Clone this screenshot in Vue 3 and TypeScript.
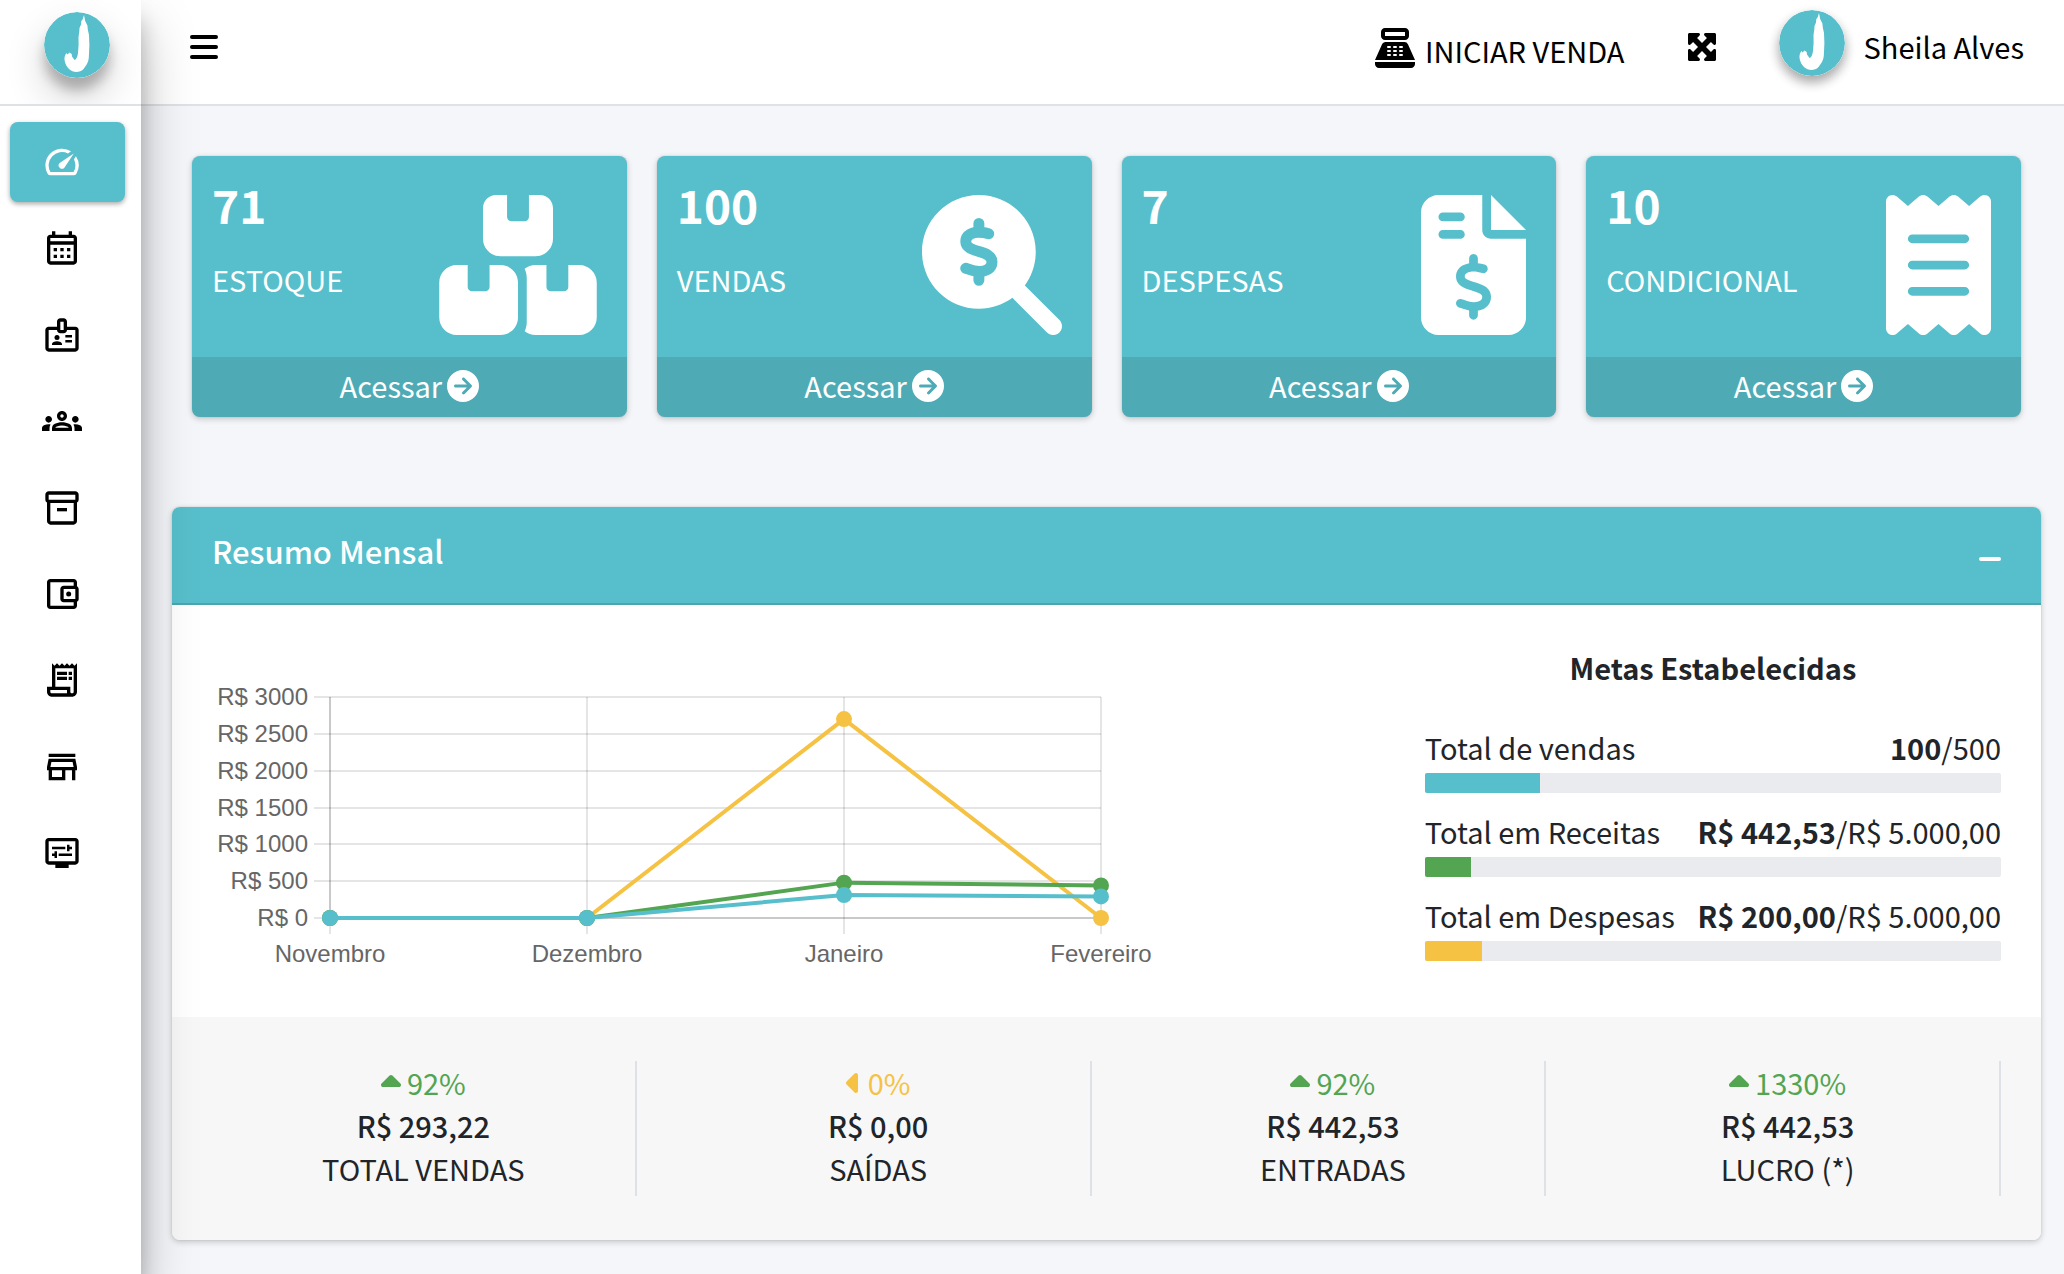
<script setup lang="ts">
interface NavItem {
  label: string
  paths: string[]
}

interface SummaryCard {
  value: number
  label: string
  box: string
  width: number
  path: string
  dollar?: boolean
}

interface Goal {
  label: string
  current: string
  target: string
  percent: number
  tone: string
}

interface Stat {
  change: string
  direction: 'up' | 'left'
  value: string
  label: string
}

interface Series {
  color: string
  values: number[]
}

const navItems: NavItem[] = [
  {
    label: 'Painel',
    paths: [
      'M20.38 8.57l-1.23 1.85a8 8 0 0 1-.22 7.58H5.07A8 8 0 0 1 15.58 6.85l1.85-1.23A10 10 0 0 0 3.35 19a2 2 0 0 0 1.72 1h13.85a2 2 0 0 0 1.74-1 10 10 0 0 0-.27-10.44zm-9.79 6.84a2 2 0 0 0 2.83 0l5.66-8.49-8.49 5.66a2 2 0 0 0 0 2.83z',
    ],
  },
  {
    label: 'Agenda',
    paths: [
      'M19 4h-1V2h-2v2H8V2H6v2H5c-1.11 0-1.99.9-1.99 2L3 20c0 1.1.89 2 2 2h14c1.1 0 2-.9 2-2V6c0-1.1-.9-2-2-2zm0 16H5V10h14v10zm0-12H5V6h14v2zM9 14H7v-2h2v2zm4 0h-2v-2h2v2zm4 0h-2v-2h2v2zm-8 4H7v-2h2v2zm4 0h-2v-2h2v2zm4 0h-2v-2h2v2z',
    ],
  },
  {
    label: 'Funcionários',
    paths: [
      'M20 7h-5V4c0-1.1-.9-2-2-2h-2c-1.1 0-2 .9-2 2v3H4c-1.1 0-2 .9-2 2v11c0 1.1.9 2 2 2h16c1.1 0 2-.9 2-2V9c0-1.1-.9-2-2-2zm-9-3h2v5h-2V4zm9 16H4V9h5c0 1.1.9 2 2 2h2c1.1 0 2-.9 2-2h5v11z',
      'M7.5 13.5a1.5 1.5 0 1 0 3 0a1.5 1.5 0 1 0-3 0z',
      'M11.08 16.18C10.44 15.9 9.74 15.75 9 15.75s-1.44.15-2.08.43C6.36 16.42 6 16.96 6 17.57V18h6v-.43c0-.61-.36-1.15-.92-1.39z',
      'M14 12h4v1.5h-4zM14 15h4v1.5h-4z',
    ],
  },
  {
    label: 'Clientes',
    paths: [
      'M4 13c1.1 0 2-.9 2-2s-.9-2-2-2-2 .9-2 2 .9 2 2 2zm1.13 1.1C4.76 14.04 4.39 14 4 14c-.99 0-1.93.21-2.78.58C.48 14.9 0 15.62 0 16.43V18h4.5v-1.61c0-.83.23-1.61.63-2.29zM20 13c1.1 0 2-.9 2-2s-.9-2-2-2-2 .9-2 2 .9 2 2 2zm4 3.43c0-.81-.48-1.53-1.22-1.85C21.93 14.21 20.99 14 20 14c-.39 0-.76.04-1.13.1.4.68.63 1.46.63 2.29V18H24v-1.57zM16.24 13.65c-1.17-.52-2.61-.9-4.24-.9s-3.07.39-4.24.9C6.68 14.13 6 15.21 6 16.39V18h12v-1.61c0-1.18-.68-2.26-1.76-2.74zM8.07 16c.09-.23.13-.39.91-.69.97-.38 1.99-.56 3.02-.56s2.05.18 3.02.56c.77.3.81.46.91.69H8.07z',
      'M12 8c.55 0 1 .45 1 1s-.45 1-1 1-1-.45-1-1 .45-1 1-1m0-2c-1.66 0-3 1.34-3 3s1.34 3 3 3 3-1.34 3-3-1.34-3-3-3z',
    ],
  },
  {
    label: 'Estoque',
    paths: [
      'M20 2H4c-1 0-2 .9-2 2v3.01c0 .72.43 1.34 1 1.69V20c0 1.1 1.1 2 2 2h14c.9 0 2-.9 2-2V8.7c.57-.35 1-.97 1-1.69V4c0-1.1-1-2-2-2zm-1 18H5V9h14v11zm1-13H4V4h16v3z',
      'M9 12h6v2H9z',
    ],
  },
  {
    label: 'Carteira',
    paths: [
      'M21 7.28V5c0-1.1-.9-2-2-2H5c-1.11 0-2 .9-2 2v14c0 1.1.89 2 2 2h14c1.1 0 2-.9 2-2v-2.28c.59-.35 1-.98 1-1.72V9c0-.74-.41-1.37-1-1.72zM20 9v6h-7V9h7zM5 19V5h14v2h-6c-1.1 0-2 .9-2 2v6c0 1.1.9 2 2 2h6v2H5z',
      'M14.5 12a1.5 1.5 0 1 0 3 0a1.5 1.5 0 1 0-3 0z',
    ],
  },
  {
    label: 'Recibos',
    paths: [
      'M19.5 3.5L18 2l-1.5 1.5L15 2l-1.5 1.5L12 2l-1.5 1.5L9 2 7.5 3.5 6 2v14H3v3c0 1.66 1.34 3 3 3h12c1.66 0 3-1.34 3-3V2l-1.5 1.5zM15 20H6c-.55 0-1-.45-1-1v-1h10v2zm4-1c0 .55-.45 1-1 1s-1-.45-1-1v-3H8V5h11v14z',
      'M9 7h6v2H9zM16 7h2v2h-2zM9 10h6v2H9zM16 10h2v2h-2z',
    ],
  },
  {
    label: 'Loja',
    paths: [
      'M18.36 9l.6 3H5.04l.6-3h12.72M20 4H4v2h16V4zm0 3H4l-1 5v2h1v6h10v-6h4v6h2v-6h1v-2l-1-5zM6 18v-4h6v4H6z',
    ],
  },
  {
    label: 'Configurações',
    paths: [
      'M20 3H4c-1.11 0-2 .89-2 2v12c0 1.1.89 2 2 2h4v2h8v-2h4c1.1 0 2-.9 2-2V5c0-1.11-.9-2-2-2zm0 14H4V5h16v12z',
      'M6 8.25h8v1.5H6zM16.5 9.75H18v-1.5h-1.5V7H15v4h1.5zM10 12.25h8v1.5h-8zM7.5 15H9v-4H7.5v1.25H6v1.5h1.5z',
    ],
  },
]

const dollarPath =
  'M192 216c8.8 0 16 7.2 16 16v17.3c8.5 1.2 16.7 3.1 24.1 5.1c8.5 2.3 13.6 11 11.3 19.6s-11 13.6-19.6 11.3c-11.1-3-22-5.2-32.1-5.3c-8.4-.1-17.4 1.8-23.6 5.5c-5.7 3.4-8.1 7.3-8.1 12.8c0 3.7 1.3 6.5 7.3 10.1c6.9 4.1 16.6 7.1 29.2 10.9l.5 .1c11.3 3.4 25.3 7.6 36.3 14.6c12.1 7.6 22.4 19.7 22.7 38.2c.3 19.3-9.6 33.3-22.9 41.6c-7.7 4.8-16.4 7.6-25.1 9.1V440c0 8.8-7.2 16-16 16s-16-7.2-16-16V422.2c-11.2-2.1-21.7-5.7-30.9-8.9c-2.1-.7-4.2-1.4-6.2-2.1c-8.4-2.8-12.9-11.9-10.1-20.2s11.9-12.9 20.2-10.1c2.5 .8 4.8 1.6 7.1 2.4c13.6 4.6 24.6 8.4 36.3 8.7c9.1 .3 17.9-1.7 23.7-5.3c5.1-3.2 7.9-7.3 7.8-14c-.1-4.6-1.8-7.8-7.7-11.6c-6.8-4.3-16.5-7.4-29-11.2l-1.6-.5c-11-3.3-24.3-7.3-34.8-13.7c-12-7.2-22.6-18.9-22.7-37.3c-.1-19.4 10.8-32.8 23.8-40.5c7.5-4.4 15.8-7.2 24.1-8.7V232c0-8.8 7.2-16 16-16z'

const cards: SummaryCard[] = [
  {
    value: 71,
    label: 'ESTOQUE',
    box: '0 0 576 512',
    width: 158,
    path: 'M248 0H208c-26.5 0-48 21.5-48 48V160c0 35.3 28.7 64 64 64H352c35.3 0 64-28.7 64-64V48c0-26.5-21.5-48-48-48H328V80c0 8.8-7.2 16-16 16H264c-8.8 0-16-7.2-16-16V0zM64 256c-35.3 0-64 28.7-64 64V448c0 35.3 28.7 64 64 64H224c35.3 0 64-28.7 64-64V320c0-35.3-28.7-64-64-64H184v80c0 8.8-7.2 16-16 16H120c-8.8 0-16-7.2-16-16V256H64zM352 512H512c35.3 0 64-28.7 64-64V320c0-35.3-28.7-64-64-64H472v80c0 8.8-7.2 16-16 16H408c-8.8 0-16-7.2-16-16V256H352c-15 0-28.8 5.1-39.7 13.8c4.9 10.4 7.7 22 7.7 34.2V464c0 12.2-2.8 23.8-7.7 34.2C323.2 506.9 337 512 352 512z',
  },
  {
    value: 100,
    label: 'VENDAS',
    box: '0 0 512 512',
    width: 140,
    path: 'M416 208c0 45.9-14.9 88.3-40 122.7L502.6 457.4c12.5 12.5 12.5 32.8 0 45.3s-32.8 12.5-45.3 0L330.7 376c-34.4 25.2-76.8 40-122.7 40C93.1 416 0 322.9 0 208S93.1 0 208 0S416 93.1 416 208z',
    dollar: true,
  },
  {
    value: 7,
    label: 'DESPESAS',
    box: '0 0 384 512',
    width: 105,
    path:
      'M64 0C28.7 0 0 28.7 0 64V448c0 35.3 28.7 64 64 64H320c35.3 0 64-28.7 64-64V160H256c-17.7 0-32-14.3-32-32V0H64zM256 0V128H384L256 0zM80 64h64a16 16 0 0 1 0 32H80a16 16 0 0 1 0-32zM80 128h64a16 16 0 0 1 0 32H80a16 16 0 0 1 0-32z' +
      dollarPath,
  },
  {
    value: 10,
    label: 'CONDICIONAL',
    box: '0 0 384 512',
    width: 105,
    path: 'M14 2.2C22.5-1.7 32.5-.3 39.6 5.8L80 40.4 120.4 5.8c9-7.7 22.3-7.7 31.2 0L192 40.4 232.4 5.8c9-7.7 22.3-7.7 31.2 0L304 40.4 344.4 5.8c7.1-6.1 17.1-7.5 25.6-3.6s14 12.4 14 21.8V488c0 9.4-5.5 17.9-14 21.8s-18.5 2.5-25.6-3.6L304 471.6l-40.4 34.6c-9 7.7-22.3 7.7-31.2 0L192 471.6l-40.4 34.6c-9 7.7-22.3 7.7-31.2 0L80 471.6 39.6 506.2c-7.1 6.1-17.1 7.5-25.6 3.6S0 497.4 0 488V24C0 14.6 5.5 6.1 14 2.2zM96 144a16 16 0 0 0 0 32H288a16 16 0 0 0 0-32zM96 240a16 16 0 0 0 0 32H288a16 16 0 0 0 0-32zM96 336a16 16 0 0 0 0 32H288a16 16 0 0 0 0-32z',
  },
]

const goals: Goal[] = [
  { label: 'Total de vendas', current: '100', target: '500', percent: 20, tone: 'teal' },
  { label: 'Total em Receitas', current: 'R$ 442,53', target: 'R$ 5.000,00', percent: 8, tone: 'green' },
  { label: 'Total em Despesas', current: 'R$ 200,00', target: 'R$ 5.000,00', percent: 10, tone: 'yellow' },
]

const stats: Stat[] = [
  { change: '92%', direction: 'up', value: 'R$ 293,22', label: 'TOTAL VENDAS' },
  { change: '0%', direction: 'left', value: 'R$ 0,00', label: 'SAÍDAS' },
  { change: '92%', direction: 'up', value: 'R$ 442,53', label: 'ENTRADAS' },
  { change: '1330%', direction: 'up', value: 'R$ 442,53', label: 'LUCRO (*)' },
]

// Chart geometry
const months = ['Novembro', 'Dezembro', 'Janeiro', 'Fevereiro']
const ticks = [3000, 2500, 2000, 1500, 1000, 500, 0]
const plot = { left: 118, step: 257, top: 12, height: 221 }
const plotRight = plot.left + plot.step * (months.length - 1)
const plotBottom = plot.top + plot.height

const series: Series[] = [
  { color: '#f6c244', values: [0, 0, 2700, 0] },
  { color: '#53a551', values: [0, 0, 480, 442.53] },
  { color: '#57bfcb', values: [0, 0, 312, 293.22] },
]

const xAt = (index: number): number => plot.left + plot.step * index
const yAt = (value: number): number => plotBottom - (value / 3000) * plot.height
const pointsOf = (s: Series): string => s.values.map((v, i) => `${xAt(i)},${yAt(v)}`).join(' ')

const logoPath =
  'M40 3L41.2 9L43.4 13.5L43.8 17.5L45 23L45.4 33L44.8 46C44.5 50 42 54 39.5 57C37.5 59.3 35 60 32.5 60C27 60 22 55.5 20.7 49C20 45.5 21 42.5 22.5 41L23.5 42.5L25.5 40.5L27.7 42L28 44.5L30.5 48C32.5 47.5 33.4 45 34 41L34.6 33L34.5 25L35.3 19.5L35.5 16L37 12.5L37.3 9L38.6 7.5Z'
</script>

<template>
  <div class="app">
    <aside class="sidebar">
      <a class="brand" href="#" aria-label="Início">
        <svg class="logo logo-deep" viewBox="0 0 66 66" aria-hidden="true">
          <circle cx="33" cy="33" r="33" fill="#57bfcb" />
          <path :d="logoPath" fill="#fff" />
        </svg>
      </a>
      <nav class="nav">
        <a
          v-for="(item, index) in navItems"
          :key="item.label"
          href="#"
          class="nav-link"
          :class="{ active: index === 0 }"
          :aria-label="item.label"
        >
          <svg viewBox="0 0 24 24" aria-hidden="true">
            <path v-for="d in item.paths" :key="d" :d="d" />
          </svg>
        </a>
      </nav>
    </aside>

    <div class="page">
      <header class="topbar">
        <button class="icon-button" type="button" aria-label="Menu">
          <svg class="bars" viewBox="0 0 448 512" aria-hidden="true">
            <path
              d="M32 64H416a32 32 0 0 1 0 64H32a32 32 0 0 1 0-64zM32 224H416a32 32 0 0 1 0 64H32a32 32 0 0 1 0-64zM32 384H416a32 32 0 0 1 0 64H32a32 32 0 0 1 0-64z"
            />
          </svg>
        </button>
        <div class="topbar-right">
          <a class="start-sale" href="#">
            <svg viewBox="0 0 24 24" fill-rule="evenodd" aria-hidden="true">
              <path d="M17 2H7c-1.1 0-2 .9-2 2v2c0 1.1.9 2 2 2h10c1.1 0 2-.9 2-2V4c0-1.1-.9-2-2-2zm0 4H7V4h10v2z" />
              <path
                d="M20 22H4c-1.1 0-2-.9-2-2v-1h20v1c0 1.1-.9 2-2 2zM18.53 10.19A2 2 0 0 0 16.7 9H7.3c-.79 0-1.51.47-1.83 1.19L2 18h20zM8.5 11h1a.5.5 0 0 1 0 1h-1a.5.5 0 0 1 0-1zM11.5 11h1a.5.5 0 0 1 0 1h-1a.5.5 0 0 1 0-1zM14.5 11h1a.5.5 0 0 1 0 1h-1a.5.5 0 0 1 0-1zM8.5 13h1a.5.5 0 0 1 0 1h-1a.5.5 0 0 1 0-1zM11.5 13h1a.5.5 0 0 1 0 1h-1a.5.5 0 0 1 0-1zM14.5 13h1a.5.5 0 0 1 0 1h-1a.5.5 0 0 1 0-1zM8.5 15h1a.5.5 0 0 1 0 1h-1a.5.5 0 0 1 0-1zM11.5 15h1a.5.5 0 0 1 0 1h-1a.5.5 0 0 1 0-1zM14.5 15h1a.5.5 0 0 1 0 1h-1a.5.5 0 0 1 0-1z"
              />
            </svg>
            <span>INICIAR VENDA</span>
          </a>
          <button class="icon-button" type="button" aria-label="Tela cheia">
            <svg class="expand" viewBox="0 0 512 512" aria-hidden="true">
              <path
                d="M200 32H56C42.7 32 32 42.7 32 56V200c0 9.7 5.8 18.5 14.8 22.2s19.3 1.7 26.2-5.2l40-40 79 79-79 79L73 295c-6.9-6.9-17.2-8.9-26.2-5.2S32 302.3 32 312V456c0 13.3 10.7 24 24 24H200c9.7 0 18.5-5.8 22.2-14.8s1.7-19.3-5.2-26.2l-40-40 79-79 79 79-40 40c-6.9 6.9-8.9 17.2-5.2 26.2s12.5 14.8 22.2 14.8H456c13.3 0 24-10.7 24-24V312c0-9.7-5.8-18.5-14.8-22.2s-19.3-1.7-26.2 5.2l-40 40-79-79 79-79 40 40c6.9 6.9 17.2 8.9 26.2 5.2s14.8-12.5 14.8-22.2V56c0-13.3-10.7-24-24-24H312c-9.7 0-18.5 5.8-22.2 14.8s-1.7 19.3 5.2 26.2l40 40-79 79-79-79 40-40c6.9-6.9 8.9-17.2 5.2-26.2S209.7 32 200 32z"
              />
            </svg>
          </button>
          <a class="user" href="#">
            <svg class="logo" viewBox="0 0 66 66" aria-hidden="true">
              <circle cx="33" cy="33" r="33" fill="#57bfcb" />
              <path :d="logoPath" fill="#fff" />
            </svg>
            <span>Sheila Alves</span>
          </a>
        </div>
      </header>

      <main class="content">
        <section class="cards">
          <article v-for="card in cards" :key="card.label" class="card">
            <div class="card-inner">
              <div>
                <h3>{{ card.value }}</h3>
                <p>{{ card.label }}</p>
              </div>
              <svg
                class="card-icon"
                :viewBox="card.box"
                :width="card.width"
                height="140"
                fill-rule="evenodd"
                aria-hidden="true"
              >
                <path :d="card.path" fill="#fff" />
                <path
                  v-if="card.dollar"
                  :d="dollarPath"
                  transform="translate(16 -128)"
                  fill="#57bfcb"
                  stroke="#57bfcb"
                  stroke-width="8"
                />
              </svg>
            </div>
            <a class="card-footer" href="#">
              <span>Acessar</span>
              <svg viewBox="0 0 512 512" fill-rule="evenodd" aria-hidden="true">
                <path
                  d="M0 256a256 256 0 1 0 512 0A256 256 0 1 0 0 256zM281 385c-9.4 9.4-24.6 9.4-33.9 0s-9.4-24.6 0-33.9l71-71L136 280c-13.3 0-24-10.7-24-24s10.7-24 24-24l182.1 0-71-71c-9.4-9.4-9.4-24.6 0-33.9s24.6-9.4 33.9 0L393 239c9.4 9.4 9.4 24.6 0 33.9L281 385z"
                />
              </svg>
            </a>
          </article>
        </section>

        <section class="panel">
          <header class="panel-header">
            <h2>Resumo Mensal</h2>
            <button class="icon-button" type="button" aria-label="Recolher">
              <svg class="minus" viewBox="0 0 22 22" aria-hidden="true">
                <rect y="9" width="22" height="4" rx="2" />
              </svg>
            </button>
          </header>

          <div class="panel-body">
            <svg class="chart" viewBox="0 0 960 300" width="960" height="300" role="img" aria-label="Resumo mensal">
              <g stroke-width="2">
                <line
                  v-for="tick in ticks"
                  :key="'h' + tick"
                  :x1="plot.left - 16"
                  :x2="plotRight"
                  :y1="Math.round(yAt(tick))"
                  :y2="Math.round(yAt(tick))"
                  stroke="rgba(0,0,0,0.1)"
                />
                <line
                  v-for="(month, i) in months"
                  :key="'v' + month"
                  :x1="xAt(i)"
                  :x2="xAt(i)"
                  :y1="plot.top"
                  :y2="plotBottom + 16"
                  stroke="rgba(0,0,0,0.1)"
                />
                <line :x1="plot.left" :x2="plot.left" :y1="plot.top" :y2="plotBottom" stroke="rgba(0,0,0,0.12)" />
                <line :x1="plot.left" :x2="plotRight" :y1="plotBottom" :y2="plotBottom" stroke="rgba(0,0,0,0.12)" />
              </g>
              <g class="chart-text" text-anchor="end">
                <text v-for="tick in ticks" :key="tick" :x="plot.left - 22" :y="Math.round(yAt(tick)) + 8">R$ {{ tick }}</text>
              </g>
              <g class="chart-text" text-anchor="middle">
                <text v-for="(month, i) in months" :key="month" :x="xAt(i)" :y="plotBottom + 44">{{ month }}</text>
              </g>
              <g v-for="s in series" :key="s.color">
                <polyline :points="pointsOf(s)" fill="none" :stroke="s.color" stroke-width="4" />
                <circle v-for="(v, i) in s.values" :key="i" :cx="xAt(i)" :cy="yAt(v)" r="8" :fill="s.color" />
              </g>
            </svg>

            <div class="goals">
              <p class="goals-title"><strong>Metas Estabelecidas</strong></p>
              <div v-for="goal in goals" :key="goal.label" class="goal">
                <div class="goal-text">
                  <span>{{ goal.label }}</span>
                  <span><strong>{{ goal.current }}</strong>/{{ goal.target }}</span>
                </div>
                <div class="track" role="progressbar" :aria-label="goal.label" :aria-valuenow="goal.percent">
                  <div class="fill" :class="goal.tone" :style="{ width: goal.percent + '%' }"></div>
                </div>
              </div>
            </div>
          </div>

          <footer class="panel-footer">
            <div v-for="stat in stats" :key="stat.label" class="stat">
              <span class="change" :class="stat.direction">
                <svg v-if="stat.direction === 'up'" viewBox="0 0 320 512" width="20" height="32" aria-hidden="true">
                  <path
                    d="M182.6 137.4c-12.5-12.5-32.8-12.5-45.3 0l-128 128c-9.2 9.2-11.9 22.9-6.9 34.9s16.6 19.8 29.6 19.8H288c12.9 0 24.6-7.8 29.6-19.8s2.2-25.7-6.9-34.9l-128-128z"
                  />
                </svg>
                <svg v-else viewBox="0 0 256 512" width="16" height="32" aria-hidden="true">
                  <path
                    d="M9.4 278.6c-12.5-12.5-12.5-32.8 0-45.3l128-128c9.2-9.2 22.9-11.9 34.9-6.9s19.8 16.6 19.8 29.6V384c0 12.9-7.8 24.6-19.8 29.6s-25.7 2.2-34.9-6.9l-128-128z"
                  />
                </svg>
                <span>{{ stat.change }}</span>
              </span>
              <h5>{{ stat.value }}</h5>
              <span>{{ stat.label }}</span>
            </div>
          </footer>
        </section>
      </main>
    </div>
  </div>
</template>

<style>
body {
  margin: 0;
  background: #f4f6f9;
}
</style>

<style scoped>
.app {
  display: flex;
  min-height: 100vh;
  background: #f4f6f9;
  color: #212529;
  font-family: 'Noto Sans CJK JP', 'Noto Sans CJK SC', sans-serif;
  font-size: 29px;
  line-height: 44px;
}

.app *,
.app {
  box-sizing: border-box;
}

h2,
h3,
h5,
p {
  margin: 0;
}

a {
  color: inherit;
  text-decoration: none;
}

svg {
  display: block;
  flex: none;
}

.icon-button {
  padding: 0;
  border: 0;
  background: none;
  color: inherit;
  cursor: pointer;
}

/* Sidebar */
.sidebar {
  position: relative;
  z-index: 2;
  flex: none;
  width: 141px;
  background: #fff;
  box-shadow: 0 28px 56px rgba(0, 0, 0, 0.25), 0 20px 20px rgba(0, 0, 0, 0.22);
}

.brand {
  display: block;
  height: 106px;
  padding: 12px 0 0 44px;
  overflow: hidden;
  border-bottom: 2px solid #dee2e6;
}

.logo {
  width: 66px;
  height: 66px;
  border-radius: 50%;
  box-shadow: 0 6px 12px rgba(0, 0, 0, 0.16), 0 6px 12px rgba(0, 0, 0, 0.23);
}

.logo-deep {
  box-shadow: 0 20px 40px rgba(0, 0, 0, 0.19), 0 12px 12px rgba(0, 0, 0, 0.23);
}

.nav {
  display: flex;
  flex-direction: column;
  justify-content: space-between;
  height: 771px;
  margin: 16px 16px 0 10px;
}

.nav-link {
  display: flex;
  align-items: center;
  height: 80px;
  padding-left: 32px;
  border-radius: 8px;
  color: #000;
}

.nav-link svg {
  width: 40px;
  height: 40px;
  fill: currentColor;
}

.nav-link.active {
  background: #57bfcb;
  color: #fff;
  box-shadow: 0 2px 6px rgba(0, 0, 0, 0.12), 0 2px 4px rgba(0, 0, 0, 0.24);
}

/* Top bar */
.page {
  flex: 1;
  min-width: 0;
}

.topbar {
  display: flex;
  align-items: center;
  justify-content: space-between;
  height: 106px;
  padding: 0 40px 10px 49px;
  border-bottom: 2px solid #dee2e6;
  background: #fff;
  color: #000;
}

.topbar svg {
  fill: currentColor;
}

.bars {
  width: 28px;
  height: 32px;
}

.expand {
  width: 32px;
  height: 32px;
}

.topbar-right {
  display: flex;
  align-items: center;
  gap: 61px;
}

.start-sale {
  display: flex;
  align-items: flex-end;
  gap: 6px;
  padding-top: 2px;
}

.start-sale svg {
  width: 48px;
  height: 48px;
}

.user {
  display: flex;
  align-items: center;
  gap: 19px;
  padding-bottom: 2px;
}

.user .logo {
  margin-bottom: 6px;
}

/* Summary cards */
.content {
  padding: 50px 23px 34px 31px;
}

.cards {
  display: grid;
  grid-template-columns: repeat(4, 1fr);
  gap: 30px;
  margin: 0 20px 90px;
}

.card {
  overflow: hidden;
  border-radius: 8px;
  background: #57bfcb;
  color: #fff;
  box-shadow: 0 0 2px rgba(0, 0, 0, 0.13), 0 2px 6px rgba(0, 0, 0, 0.2);
}

.card-inner {
  display: flex;
  justify-content: space-between;
  height: 201px;
  padding: 20px 30px 22px 20px;
}

.card h3 {
  margin-bottom: 25px;
  font-size: 46px;
  font-weight: 700;
  line-height: 56px;
}

.card-icon {
  align-self: flex-end;
}

.card-footer {
  display: flex;
  align-items: flex-start;
  justify-content: center;
  gap: 5px;
  height: 60px;
  padding-top: 6px;
  background: rgba(0, 0, 0, 0.1);
}

.card-footer svg {
  width: 32px;
  height: 32px;
  margin-top: 7px;
  fill: #fff;
}

/* Monthly summary */
.panel {
  overflow: hidden;
  border-radius: 8px;
  background: #fff;
  box-shadow: 0 0 2px rgba(0, 0, 0, 0.13), 0 2px 6px rgba(0, 0, 0, 0.2);
}

.panel-header {
  display: flex;
  align-items: flex-start;
  justify-content: space-between;
  height: 98px;
  padding: 19px 40px 0;
  border-bottom: 2px solid rgba(0, 0, 0, 0.13);
  background: #57bfcb;
  color: #fff;
}

.panel-header h2 {
  font-size: 31px;
  font-weight: 500;
  line-height: 50px;
}

.minus {
  width: 22px;
  height: 66px;
  fill: currentColor;
}

.panel-body {
  display: grid;
  grid-template-columns: minmax(0, 1fr) calc((100% + 30px) / 3 - 30px);
  gap: 30px;
  padding: 40px 40px 32px;
}

.chart {
  max-width: 100%;
  margin-top: 40px;
  overflow: visible;
}

.chart-text {
  fill: #666;
  font-family: 'Liberation Sans', Arial, sans-serif;
  font-size: 24px;
}

.goals-title {
  margin-bottom: 36px;
  text-align: center;
}

.goal {
  margin-bottom: 16px;
}

.goal-text {
  display: flex;
  justify-content: space-between;
  margin-bottom: 4px;
  white-space: nowrap;
}

.track {
  height: 20px;
  overflow: hidden;
  border-radius: 2px;
  background: #e9ebef;
}

.fill {
  height: 100%;
}

.teal {
  background: #57bfcb;
}

.green {
  background: #53a551;
}

.yellow {
  background: #f6c244;
}

.panel-footer {
  display: grid;
  grid-template-columns: repeat(4, 1fr);
  gap: 30px;
  padding: 44px 40px;
  background: #f7f7f7;
}

.stat {
  display: flex;
  flex-direction: column;
  align-items: center;
  padding-bottom: 6px;
  border-right: 2px solid #dee2e6;
  line-height: 43px;
}

.stat h5 {
  font-size: 29px;
  font-weight: 500;
}

.change {
  display: flex;
  align-items: center;
  gap: 6px;
}

.change svg {
  fill: currentColor;
}

.change.up {
  color: #53a551;
}

.change.left {
  color: #f6c244;
}
</style>
